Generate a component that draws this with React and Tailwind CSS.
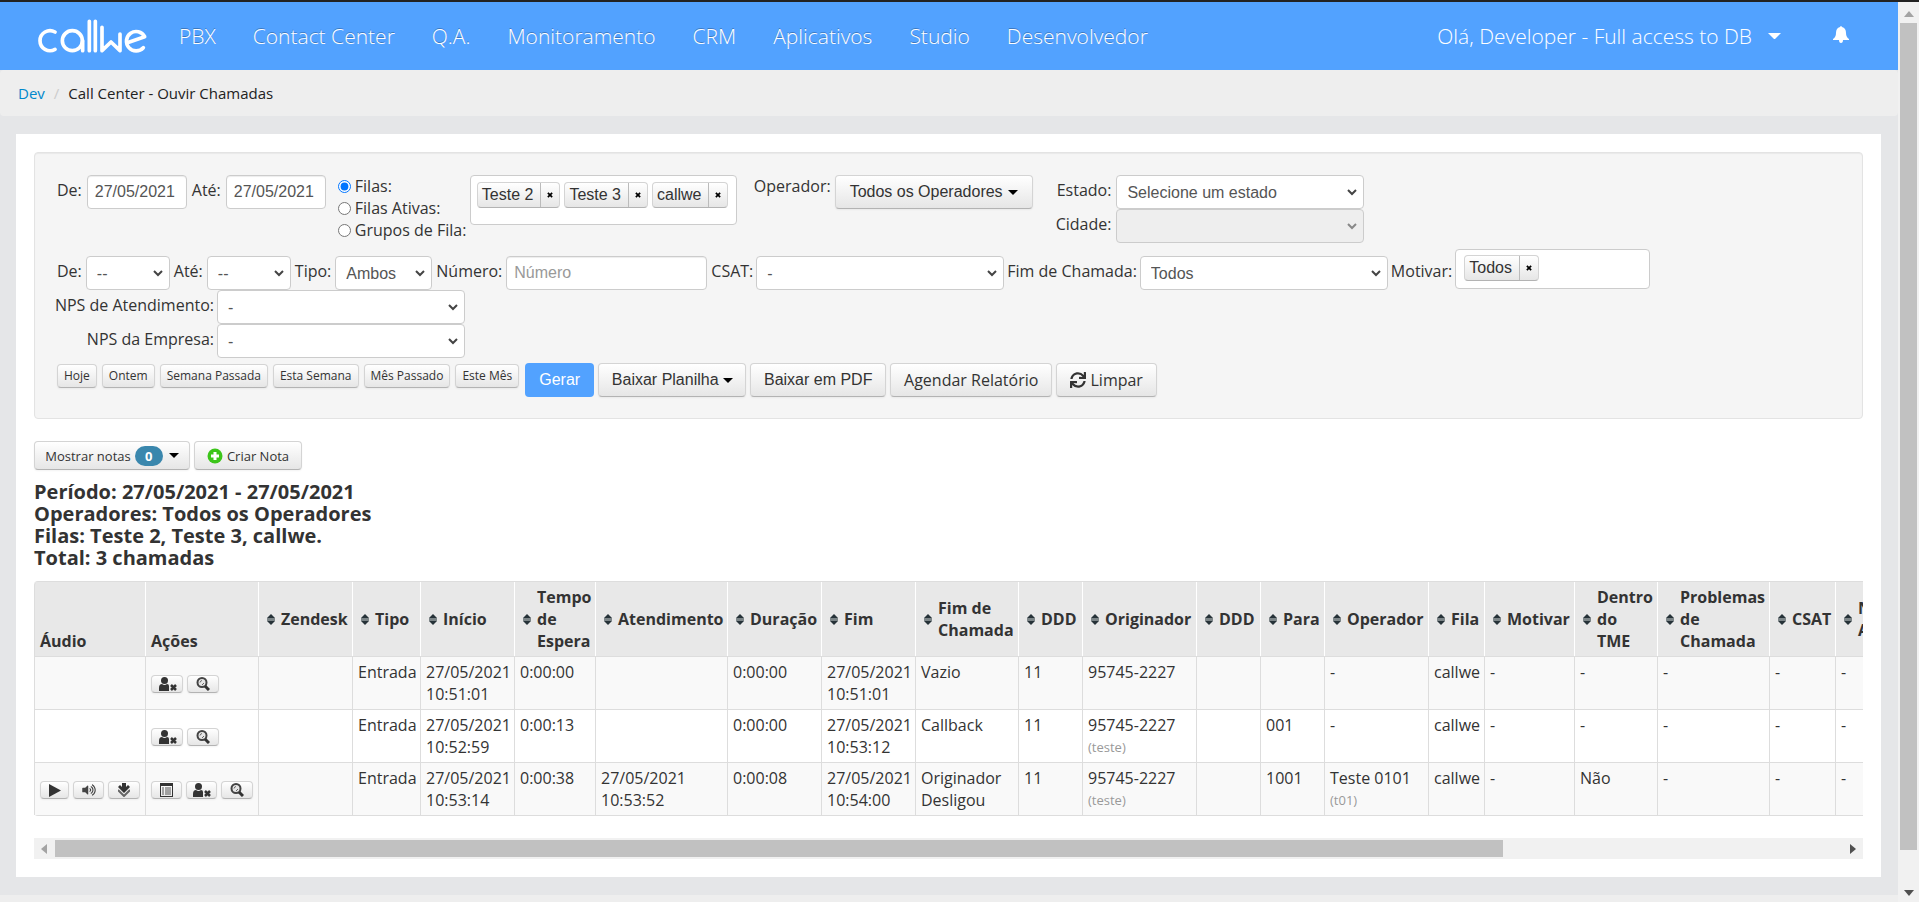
import React from 'react';
import { FaSync, FaVolumeUp } from 'react-icons/fa';

const navItems = ['PBX', 'Contact Center', 'Q.A.', 'Monitoramento', 'CRM', 'Aplicativos', 'Studio', 'Desenvolvedor'];

const columns = [
  { label: 'Áudio', width: 'w-[111px]', plain: true },
  { label: 'Ações', width: 'w-[113px]', plain: true },
  { label: 'Zendesk', width: 'w-[94px]' },
  { label: 'Tipo', width: 'w-[68px]' },
  { label: 'Início', width: 'w-[94px]' },
  { label: 'Tempo de Espera', width: 'w-[81px]' },
  { label: 'Atendimento', width: 'w-[132px]' },
  { label: 'Duração', width: 'w-[94px]' },
  { label: 'Fim', width: 'w-[94px]' },
  { label: 'Fim de Chamada', width: 'w-[103px]' },
  { label: 'DDD', width: 'w-[64px]' },
  { label: 'Originador', width: 'w-[114px]' },
  { label: 'DDD', width: 'w-[64px]' },
  { label: 'Para', width: 'w-[64px]' },
  { label: 'Operador', width: 'w-[104px]' },
  { label: 'Fila', width: 'w-[56px]' },
  { label: 'Motivar', width: 'w-[90px]' },
  { label: 'Dentro do TME', width: 'w-[83px]' },
  { label: 'Problemas de Chamada', width: 'w-[112px]' },
  { label: 'CSAT', width: 'w-[66px]' },
  { label: 'NPS de Atendimento', width: 'w-[132px]' },
];

const calls = [
  {
    audio: false,
    cells: ['', 'Entrada', '27/05/2021 10:51:01', '0:00:00', '', '0:00:00', '27/05/2021 10:51:01', 'Vazio', '11', '95745-2227', '', '', '-', 'callwe', '-', '-', '-', '-', '-'],
  },
  {
    audio: false,
    cells: ['', 'Entrada', '27/05/2021 10:52:59', '0:00:13', '', '0:00:00', '27/05/2021 10:53:12', 'Callback', '11', ['95745-2227', '(teste)'], '', '001', '-', 'callwe', '-', '-', '-', '-', '-'],
  },
  {
    audio: true,
    cells: ['', 'Entrada', '27/05/2021 10:53:14', '0:00:38', '27/05/2021 10:53:52', '0:00:08', '27/05/2021 10:54:00', 'Originador Desligou', '11', ['95745-2227', '(teste)'], '', '1001', ['Teste 0101', '(t01)'], 'callwe', '-', 'Não', '-', '-', '-'],
  },
];

const buttonBase =
  'inline-flex items-center justify-center whitespace-nowrap rounded border border-[#d4d4d4] border-b-[#b3b3b3] bg-linear-to-b from-white to-[#e6e6e6] text-[#333] shadow-[0_1px_2px_rgba(0,0,0,0.05)]';
const arial = "font-['Liberation_Sans',Arial,sans-serif]";

function Logo() {
  return (
    <svg viewBox="24 10 327 108" className="h-[36px] w-[109px]" fill="none" stroke="#fff" strokeWidth="11" strokeLinecap="round" strokeLinejoin="round" role="img" aria-label="callwe">
      <path d="M75 52 A30 30 0 1 0 75 104" />
      <circle cx="127" cy="78" r="30" />
      <path d="M158 78 V108 M178 20 V108 M196 20 V108 M216 38 V108 L243 82 L270 108 V58" />
      <path d="M292 84 L344 66 A29 29 0 1 0 340 99" />
    </svg>
  );
}

function Bell() {
  return (
    <svg viewBox="0 0 16 17" className="h-[17px] w-[16px]" fill="currentColor" aria-hidden="true">
      <path d="M7 1 Q8 -1 9 1 Q13 2 13 7 Q13 11 16 13 V14 H10 Q10 17 8 17 Q6 17 6 14 H0 V13 Q3 11 3 7 Q3 2 7 1 Z" />
    </svg>
  );
}

function Caret({ className = 'w-[10px] text-black' }) {
  return (
    <svg viewBox="0 0 10 5" className={`h-auto ${className}`} aria-hidden="true">
      <path d="M0 0 H10 L5 5 Z" fill="currentColor" />
    </svg>
  );
}

function SortIcon() {
  return (
    <svg viewBox="0 0 8 11" className="h-[11px] w-[8px] shrink-0" aria-hidden="true">
      <path d="M0 4 L4 0 L8 4 Z M0 7 L4 11 L8 7 Z" fill="#263238" />
      <path d="M0 4 H8 V7 H0 Z" fill="#7b8487" />
    </svg>
  );
}

function Select({ id, value, width, disabled }) {
  return (
    <span className={`relative inline-block ${width}`}>
      <select
        id={id}
        defaultValue={value}
        disabled={disabled}
        className={`block h-[34px] w-full appearance-none rounded border border-[#ccc] pl-[10px] pt-0.5 text-base text-[#555] ${arial} ${disabled ? 'bg-[#eee]' : 'bg-white'}`}
      >
        <option>{value}</option>
      </select>
      <svg viewBox="0 0 10 7" className={`pointer-events-none absolute right-[7px] top-[14px] h-[7px] w-[10px] ${disabled ? 'text-[#888]' : 'text-[#444]'}`} fill="none" stroke="currentColor" strokeWidth="2" aria-hidden="true">
        <path d="M1 1 L5 5 L9 1" />
      </svg>
    </span>
  );
}

function Tag({ children }) {
  return (
    <span className={`inline-flex h-[26px] shrink-0 items-stretch whitespace-nowrap rounded border border-[#d4d4d4] border-b-[#b3b3b3] bg-linear-to-b from-white to-[#e6e6e6] text-base leading-6 text-[#333] ${arial}`}>
      <span className="pl-1 pr-[7px]">{children}</span>
      <button type="button" aria-label={`Remover ${children}`} className="flex w-[19px] items-center justify-center border-l border-[#bbb] text-black">
        <svg viewBox="0 0 7 7" className="h-[6px] w-[6px]" stroke="currentColor" strokeWidth="2" aria-hidden="true">
          <path d="M1 1 L6 6 M6 1 L1 6" />
        </svg>
      </button>
    </span>
  );
}

function PlayIcon() {
  return (
    <svg viewBox="0 0 12 13" className="h-[13px] w-[12px]" aria-hidden="true">
      <path d="M0 0 L12 6.500 L0 13 Z" fill="#333" />
    </svg>
  );
}

function UserRemoveIcon() {
  return (
    <svg viewBox="0 0 19 14" className="h-[14px] w-[19px]" aria-hidden="true">
      <circle cx="6.500" cy="3.500" r="3.500" fill="#333" />
      <path d="M1 14 V11 Q1 7 4 7 Q6.500 9 9 7 Q11 7 11 9 V14 Z" fill="#333" />
      <path d="M13 8 L18 13 M18 8 L13 13" stroke="#333" strokeWidth="2.500" />
    </svg>
  );
}

function SearchIcon() {
  return (
    <svg viewBox="0 0 14 14" className="h-[14px] w-[14px]" aria-hidden="true">
      <circle cx="6" cy="5.500" r="4.500" fill="#e6e6e6" stroke="#444" strokeWidth="2" />
      <path d="M4 5.500 A2.500 2.500 0 0 1 6 3.500 M6 8 L8 6" fill="none" stroke="#666" />
      <path d="M9 9 L13 13" stroke="#333" strokeWidth="3" />
    </svg>
  );
}

function DownloadIcon() {
  return (
    <svg viewBox="0 0 12 14" className="h-[14px] w-[12px]" aria-hidden="true">
      <path d="M4 0 H8 V4 L10 2 L12 4 L6 10 L0 4 L2 2 L4 4 Z" fill="#333" />
      <path d="M0 7 L6 13 L12 7" fill="none" stroke="#666" strokeWidth="2" />
    </svg>
  );
}

function ListIcon() {
  return (
    <svg viewBox="0 0 13 14" className="h-[14px] w-[13px]" aria-hidden="true">
      <path d="M0 0 H13 V14 H0 Z M1 3 V13 H12 V3 Z" fill="#333" fillRule="evenodd" />
      <path d="M2 5 H4 M5 5 H11 M2 7 H4 M5 7 H11 M2 9 H4 M5 9 H11 M2 11 H4 M5 11 H11" stroke="#555" />
    </svg>
  );
}

function IconButton({ label, width, children }) {
  return (
    <button type="button" aria-label={label} className={`${buttonBase} h-[18px] ${width}`}>
      {children}
    </button>
  );
}

function Header() {
  return (
    <header className="flex h-[68px] items-center bg-[#52a2ff] pl-[38px] pr-[49px] text-[21px] font-light text-white [text-shadow:0_-1px_0_rgba(0,0,0,0.25)]">
      <a href="#" className="mr-8">
        <Logo />
      </a>
      <nav className="flex gap-[37px]">
        {navItems.map((item) => (
          <a key={item} href="#">{item}</a>
        ))}
      </nav>
      <button type="button" className="ml-auto flex items-center gap-4">
        Olá, Developer - Full access to DB
        <Caret className="w-[13px] text-white" />
      </button>
      <button type="button" aria-label="Notificações" className="mb-1 ml-[52px]">
        <Bell />
      </button>
    </header>
  );
}

function Filters() {
  return (
    <form className="rounded border border-[#e3e3e3] bg-[#f5f5f5] px-[22px] pb-[21px] pt-[22px] shadow-[inset_0_1px_1px_rgba(0,0,0,0.05)]">
      <div className="flex h-[74px] items-start">
        <label htmlFor="from" className="mr-[5px] pt-1">De:</label>
        <input id="from" defaultValue="27/05/2021" className={`mr-[5px] h-[34px] w-[100px] rounded border border-[#ccc] bg-white px-[7px] text-[#555] shadow-[inset_0_1px_1px_rgba(0,0,0,0.075)] ${arial}`} />
        <label htmlFor="to" className="mr-[5px] pt-1">Até:</label>
        <input id="to" defaultValue="27/05/2021" className={`h-[34px] w-[100px] rounded border border-[#ccc] bg-white px-[7px] text-[#555] shadow-[inset_0_1px_1px_rgba(0,0,0,0.075)] ${arial}`} />
        <div className="ml-3 w-[132px] whitespace-nowrap">
          {['Filas:', 'Filas Ativas:', 'Grupos de Fila:'].map((item, i) => (
            <label key={item} className="flex items-center gap-1">
              <input type="radio" name="queue" defaultChecked={i === 0} className="h-[13px] w-[13px]" />
              {item}
            </label>
          ))}
        </div>
        <div className="flex h-[50px] w-[267px] items-start gap-1 rounded border border-[#ccc] bg-white px-1.5 pt-1.5">
          <Tag>Teste 2</Tag>
          <Tag>Teste 3</Tag>
          <Tag>callwe</Tag>
        </div>
        <span className="ml-[17px] mr-1">Operador:</span>
        <button type="button" className={`${buttonBase} ${arial} h-[34px] w-[198px] gap-[5px]`}>
          Todos os Operadores
          <Caret />
        </button>
        <div className="ml-[23px]">
          <div className="flex items-start justify-end gap-[5px]">
            <label htmlFor="state" className="pt-1">Estado:</label>
            <Select id="state" value="Selecione um estado" width="w-[248px]" />
          </div>
          <div className="flex items-start justify-end gap-[5px]">
            <label htmlFor="city" className="pt-1">Cidade:</label>
            <Select id="city" value="" width="w-[248px]" disabled />
          </div>
        </div>
      </div>

      <div className="flex h-[41px] items-end gap-1">
        <label htmlFor="hour-from" className="mb-2">De:</label>
        <Select id="hour-from" value="--" width="w-[84px]" />
        <label htmlFor="hour-to" className="mb-2">Até:</label>
        <Select id="hour-to" value="--" width="w-[84px]" />
        <label htmlFor="type" className="mb-2">Tipo:</label>
        <Select id="type" value="Ambos" width="w-[97px]" />
        <label htmlFor="number" className="mb-2">Número:</label>
        <input id="number" placeholder="Número" className={`h-[34px] w-[201px] rounded border border-[#ccc] bg-white px-[7px] placeholder:text-[#999] shadow-[inset_0_1px_1px_rgba(0,0,0,0.075)] ${arial}`} />
        <div className="flex h-full items-end gap-[3px]">
          <label htmlFor="csat" className="mb-2">CSAT:</label>
          <Select id="csat" value="-" width="w-[248px]" />
          <label htmlFor="call-end" className="mb-2">Fim de Chamada:</label>
          <Select id="call-end" value="Todos" width="w-[248px]" />
          <span className="mb-2">Motivar:</span>
          <div className="flex h-[40px] w-[195px] items-start self-start rounded border border-[#ccc] bg-white px-2 pt-[5px]">
            <Tag>Todos</Tag>
          </div>
        </div>
      </div>

      <div className="flex w-[408px] flex-col items-end whitespace-nowrap">
        <div className="flex gap-[3px]">
          <label htmlFor="nps-service" className="pt-1">NPS de Atendimento:</label>
          <Select id="nps-service" value="-" width="w-[248px]" />
        </div>
        <div className="flex gap-[3px]">
          <label htmlFor="nps-company" className="pt-1">NPS da Empresa:</label>
          <Select id="nps-company" value="-" width="w-[248px]" />
        </div>
      </div>

      <div className="mt-[5px] flex h-[34px] gap-1">
        <div className="flex gap-[5px] pt-px">
          {['Hoje', 'Ontem', 'Semana Passada', 'Esta Semana', 'Mês Passado', 'Este Mês'].map((item) => (
            <button key={item} type="button" className={`${buttonBase} h-[24px] px-1.5 text-xs`}>{item}</button>
          ))}
        </div>
        <button type="submit" className={`ml-0.5 h-[34px] w-[69px] rounded bg-[#52a2ff] text-white ${arial}`}>Gerar</button>
        <button type="button" className={`${buttonBase} ${arial} w-[148px] gap-1`}>
          Baixar Planilha
          <Caret />
        </button>
        <button type="button" className={`${buttonBase} ${arial} w-[136px]`}>Baixar em PDF</button>
        <button type="button" className={`${buttonBase} w-[162px]`}>Agendar Relatório</button>
        <button type="button" className={`${buttonBase} w-[101px] gap-1`}>
          <FaSync className="h-[16px] w-[16px]" />
          Limpar
        </button>
      </div>
    </form>
  );
}

function CallTable() {
  return (
    <div className="overflow-hidden">
      <table className="w-[1933px] table-fixed border-separate border-spacing-0 rounded border border-l-0 border-[#ddd]">
        <colgroup>
          {columns.map((col, i) => (
            <col key={i} className={col.width} />
          ))}
        </colgroup>
        <thead>
          <tr className="bg-[#e8e8e8]">
            {columns.map((col, i) => (
              <th key={i} className={`h-[74px] border-l px-[5px] py-1 text-left font-bold first:rounded-tl first:border-[#ddd] ${col.plain ? 'align-bottom' : 'align-middle'} border-white`}>
                {col.plain ? (
                  col.label
                ) : (
                  <span className="flex items-center gap-1.5 pl-[3px]">
                    <SortIcon />
                    {col.label}
                  </span>
                )}
              </th>
            ))}
          </tr>
        </thead>
        <tbody>
          {calls.map((call, row) => (
            <tr key={row} className="odd:bg-[#f9f9f9]">
              <td className="border-l border-t border-[#ddd] px-[5px] align-middle">
                {call.audio && (
                  <div className="flex gap-1 pt-0.5">
                    <IconButton label="Ouvir" width="w-[29px]"><PlayIcon /></IconButton>
                    <IconButton label="Volume" width="w-[31px]"><FaVolumeUp className="h-[12px] w-[14px] text-[#444]" /></IconButton>
                    <IconButton label="Baixar" width="w-[32px]"><DownloadIcon /></IconButton>
                  </div>
                )}
              </td>
              <td className="border-l border-t border-[#ddd] px-[5px] align-middle">
                <div className="flex gap-1 pt-0.5">
                  {call.audio && <IconButton label="Detalhes" width="w-[31px]"><ListIcon /></IconButton>}
                  <IconButton label="Remover operador" width="w-[32px]"><UserRemoveIcon /></IconButton>
                  <IconButton label="Pesquisar" width="w-[32px]"><SearchIcon /></IconButton>
                </div>
              </td>
              {call.cells.map((cell, i) => (
                <td key={i} className="h-[53px] border-l border-t border-[#ddd] px-[5px] py-1 align-top">
                  {Array.isArray(cell) ? (
                    <>
                      {cell[0]}
                      <small className="block text-[13px] leading-[22px] text-[#999]">{cell[1]}</small>
                    </>
                  ) : (
                    cell
                  )}
                </td>
              ))}
            </tr>
          ))}
        </tbody>
      </table>
    </div>
  );
}

function HorizontalScrollbar() {
  return (
    <div className="mt-[22px] flex h-[21px] items-center bg-[#f1f1f1] px-[7px]" aria-hidden="true">
      <svg viewBox="0 0 6 10" className="h-[10px] w-[6px]"><path d="M6 0 V10 L0 5 Z" fill="#a3a3a3" /></svg>
      <div className="ml-2 mr-[7px] grow">
        <div className="h-[17px] w-[81%] bg-[#c1c1c1]" />
      </div>
      <svg viewBox="0 0 6 10" className="h-[10px] w-[6px]"><path d="M0 0 V10 L6 5 Z" fill="#505050" /></svg>
    </div>
  );
}

export default function App() {
  return (
    <div className="flex h-screen flex-col overflow-hidden border-t-2 border-[#222] bg-[#eee] font-['Open_Sans','Noto_Sans',sans-serif] text-base leading-[22px] text-[#333]">
      <div className="flex min-h-0 grow">
        <div className="min-w-0 grow">
          <Header />
          <div className="bg-[#e5e6e8] pb-[18px]">
            <nav className="flex h-[46px] items-center gap-[9px] rounded bg-[#eee] px-[18px] text-[15px]" aria-label="Breadcrumb">
              <a href="#" className="text-[#0088cc]">Dev</a>
              <span className="text-[#ccc]">/</span>
              <span className="text-[#222]">Call Center - Ouvir Chamadas</span>
            </nav>
            <main className="ml-4 mr-[17px] mt-[18px] bg-white px-[18px] py-[18px]">
              <Filters />
              <div className="mt-[22px] flex gap-1">
                <button type="button" className={`${buttonBase} h-[29px] w-[156px] gap-1 text-[13px]`}>
                  Mostrar notas
                  <span className="mr-0.5 w-[28px] rounded-full bg-[#3a87ad] text-center font-bold leading-5 text-white">0</span>
                  <Caret />
                </button>
                <button type="button" className={`${buttonBase} h-[29px] w-[108px] gap-1 text-[13px]`}>
                  <svg viewBox="0 0 16 16" className="h-[16px] w-[16px]" aria-hidden="true">
                    <circle cx="8" cy="8" r="7.500" fill="#3cc51a" />
                    <path d="M8 4 V12 M4 8 H12" stroke="#fff" strokeWidth="3" />
                  </svg>
                  Criar Nota
                </button>
              </div>
              <h4 className="mb-3 mt-[11px] text-xl font-bold leading-[22px]">
                Período: 27/05/2021 - 27/05/2021<br />
                Operadores: Todos os Operadores<br />
                Filas: Teste 2, Teste 3, callwe.<br />
                Total: 3 chamadas
              </h4>
              <CallTable />
              <HorizontalScrollbar />
            </main>
          </div>
        </div>
        <div className="flex w-[21px] shrink-0 flex-col items-center bg-[#f1f1f1] pb-1.5 pt-[9px]" aria-hidden="true">
          <svg viewBox="0 0 10 6" className="h-[6px] w-[10px] shrink-0"><path d="M0 6 H10 L5 0 Z" fill="#a3a3a3" /></svg>
          <div className="mb-1.5 mt-1.5 flex w-[17px] grow flex-col"><div className="h-[96%] bg-[#c1c1c1]" /></div>
          <svg viewBox="0 0 10 6" className="h-[6px] w-[10px] shrink-0"><path d="M0 0 H10 L5 6 Z" fill="#505050" /></svg>
        </div>
      </div>
    </div>
  );
}
